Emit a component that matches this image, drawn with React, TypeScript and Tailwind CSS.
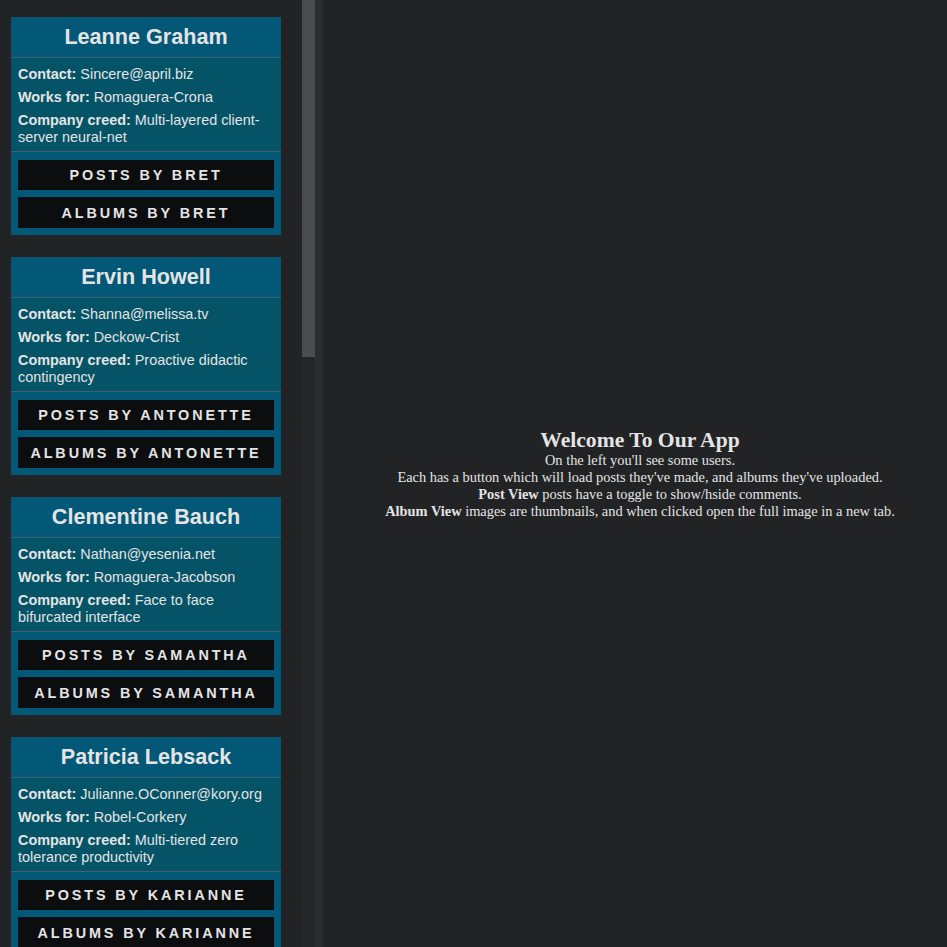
import React from "react";

type User = {
  name: string;
  username: string;
  email: string;
  company: string;
  catchPhrase: string;
};

const users: User[] = [
  { name: "Leanne Graham", username: "Bret", email: "Sincere@april.biz", company: "Romaguera-Crona", catchPhrase: "Multi-layered client-server neural-net" },
  { name: "Ervin Howell", username: "Antonette", email: "Shanna@melissa.tv", company: "Deckow-Crist", catchPhrase: "Proactive didactic contingency" },
  { name: "Clementine Bauch", username: "Samantha", email: "Nathan@yesenia.net", company: "Romaguera-Jacobson", catchPhrase: "Face to face bifurcated interface" },
  { name: "Patricia Lebsack", username: "Karianne", email: "Julianne.OConner@kory.org", company: "Robel-Corkery", catchPhrase: "Multi-tiered zero tolerance productivity" },
  { name: "Chelsey Dietrich", username: "Kamren", email: "Lucio_Hettinger@annie.ca", company: "Keebler LLC", catchPhrase: "User-centric fault-tolerant solution" },
  { name: "Mrs. Dennis Schulist", username: "Leopoldo_Corkery", email: "Karley_Dach@jasper.info", company: "Considine-Lockman", catchPhrase: "Synchronised bottom-line interface" },
];

function UserCard({ user }: { user: User }) {
  return (
    <div className="w-[270px] bg-[#035878] text-[#e4e4e4] shrink-0">
      {/* Header */}
      <h2 className="h-[41px] flex items-center justify-center text-[21.6px] font-bold border-b border-[#41606e]">
        {user.name}
      </h2>

      {/* Details */}
      <div className="bg-[#045367] px-[7px] pt-[8px] pb-[6px] flex flex-col gap-[6.5px] text-[14.4px] leading-[16.5px] border-b border-[#41606e]">
        <p>
          <b>Contact:</b> {user.email}
        </p>
        <p>
          <b>Works for:</b> {user.company}
        </p>
        <p>
          <b>Company creed:</b> {user.catchPhrase}
        </p>
      </div>

      {/* Buttons */}
      <div className="px-[7px] pt-[8px] pb-[7px] flex flex-col gap-[7px]">
        <button className="h-[30px] pt-[2px] bg-[#0b0d0e] text-[14.4px] font-bold uppercase tracking-[0.2em] text-[#e4e4e4]">
          Posts by {user.username}
        </button>
        <button className="h-[31px] pt-[2px] bg-[#0b0d0e] text-[14.4px] font-bold uppercase tracking-[0.2em] text-[#e4e4e4]">
          Albums by {user.username}
        </button>
      </div>
    </div>
  );
}

export default function App() {
  return (
    <div
      className="h-[947px] w-full flex bg-[#222325] overflow-hidden"
      style={{ fontFamily: '"Liberation Sans", Arial, sans-serif' }}
    >
      {/* Users list */}
      <div className="w-[302px] shrink-0 h-full overflow-hidden pt-[17px] pl-[11px] flex flex-col gap-[22px]">
        {users.map((u) => (
          <UserCard key={u.username} user={u} />
        ))}
      </div>

      {/* Scrollbar */}
      <div className="w-[13px] shrink-0 h-full bg-[#242728] flex flex-col">
        <div className="h-[357px] bg-[#494d50]" />
      </div>
      <div className="w-[8px] shrink-0 h-full bg-[#2b2e31]" />

      {/* Main */}
      <div
        className="flex-1 h-full flex flex-col items-center justify-center text-center text-[#e4e4e4] pl-[10px]"
        style={{ fontFamily: '"Liberation Serif", "Times New Roman", serif' }}
      >
        <h1 className="text-[21.6px] font-bold leading-[24px]">Welcome To Our App</h1>
        <div className="text-[14.4px] leading-[17px]">
          <p>On the left you'll see some users.</p>
          <p>Each has a button which will load posts they've made, and albums they've uploaded.</p>
          <p>
            <b>Post View</b> posts have a toggle to show/hside comments.
          </p>
          <p>
            <b>Album View</b> images are thumbnails, and when clicked open the full image in a new tab.
          </p>
        </div>
      </div>
    </div>
  );
}
